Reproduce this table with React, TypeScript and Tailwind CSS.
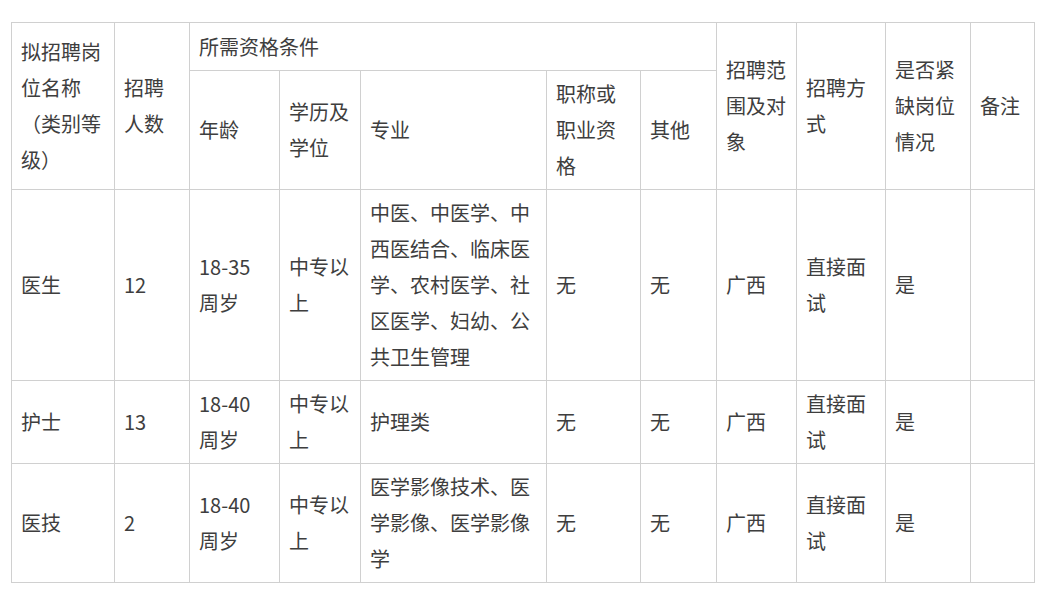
import React from 'react';

const cell = 'border border-[#d0d0d0] px-[9px] py-[5px] align-middle text-left font-normal';

const rows = [
  { name: '医生', count: '12', age: '18-35周岁', edu: '中专以上', major: '中医、中医学、中西医结合、临床医学、农村医学、社区医学、妇幼、公共卫生管理' },
  { name: '护士', count: '13', age: '18-40周岁', edu: '中专以上', major: '护理类' },
  { name: '医技', count: '2', age: '18-40周岁', edu: '中专以上', major: '医学影像技术、医学影像、医学影像学' },
];

export default function App() {
  return (
    <div
      className="min-h-[591px] bg-white pl-[11px] pt-[22px] text-[20px] leading-[36px] text-[#3e3e3e]"
      style={{ fontFamily: '"Noto Sans CJK SC", "Noto Sans", sans-serif' }}
    >
      <table className="w-[1023px] table-fixed border-collapse">
        <colgroup>
          <col className="w-[103px]" />
          <col className="w-[75px]" />
          <col className="w-[90px]" />
          <col className="w-[81px]" />
          <col className="w-[186px]" />
          <col className="w-[94px]" />
          <col className="w-[76px]" />
          <col className="w-[80px]" />
          <col className="w-[89px]" />
          <col className="w-[85px]" />
          <col className="w-[64px]" />
        </colgroup>
        <thead>
          <tr className="h-[48px]">
            <th rowSpan={2} className={cell}>拟招聘岗位名称（类别等级）</th>
            <th rowSpan={2} className={cell}>招聘人数</th>
            <th colSpan={5} className={cell}>所需资格条件</th>
            <th rowSpan={2} className={cell}>招聘范围及对象</th>
            <th rowSpan={2} className={cell}>招聘方式</th>
            <th rowSpan={2} className={cell}>是否紧缺岗位情况</th>
            <th rowSpan={2} className={cell}>备注</th>
          </tr>
          <tr className="h-[119px]">
            <th className={cell}>年龄</th>
            <th className={cell}>学历及学位</th>
            <th className={cell}>专业</th>
            <th className={cell}>职称或职业资格</th>
            <th className={cell}>其他</th>
          </tr>
        </thead>
        <tbody>
          {rows.map((r) => (
            <tr key={r.name}>
              <td className={cell}>{r.name}</td>
              <td className={cell}>{r.count}</td>
              <td className={cell}>{r.age}</td>
              <td className={cell}>{r.edu}</td>
              <td className={cell}>{r.major}</td>
              <td className={cell}>无</td>
              <td className={cell}>无</td>
              <td className={cell}>广西</td>
              <td className={cell}>直接面试</td>
              <td className={cell}>是</td>
              <td className={cell}></td>
            </tr>
          ))}
        </tbody>
      </table>
    </div>
  );
}
